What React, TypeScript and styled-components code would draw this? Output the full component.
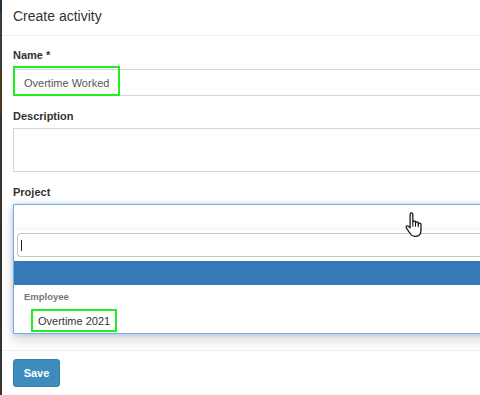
import React from "react";
import styled, { createGlobalStyle } from "styled-components";

const GlobalStyle = createGlobalStyle`
  html, body {
    margin: 0;
    height: 100%;
    overflow: hidden;
    background: #353535;
    font-family: "Liberation Sans", Arial, sans-serif;
  }
`;

const Page = styled.div`
  position: relative;
  display: flex;
  height: 395px;
  width: 480px;
  overflow: hidden;
`;

// sliver of the page behind the modal
const Backdrop = styled.div`
  width: 2px;
  flex-shrink: 0;
  background: linear-gradient(
    to bottom,
    #1d3346 0px, #1d3346 12px,
    #3b3b3b 12px, #3b3b3b 70px,
    #4b3a18 70px, #4b3a18 115px,
    #343434 115px
  );
`;

const Modal = styled.div`
  width: 640px;
  flex-shrink: 0;
  background: #fff;
  display: flex;
  flex-direction: column;
`;

const Header = styled.div`
  height: 36px;
  box-sizing: border-box;
  display: flex;
  align-items: center;
  padding: 0 11px 3px;
  border-bottom: 1px solid #f0f0f0;
`;

const Title = styled.h4`
  margin: 0;
  font-size: 14px;
  font-weight: 400;
  color: #333;
`;

const Body = styled.div`
  padding: 12px 0 16px 11px;
`;

const FormGroup = styled.div`
  margin-bottom: 13px;
  &:last-child {
    margin-bottom: 0;
  }
`;

const Label = styled.label<{ $gap: number }>`
  display: block;
  font-size: 11px;
  font-weight: 700;
  line-height: 15px;
  color: #333;
  margin-bottom: ${(p) => p.$gap}px;
`;

const TextInput = styled.div`
  position: relative;
  height: 27px;
  box-sizing: border-box;
  border: 1px solid #d2d6de;
  display: flex;
  align-items: center;
  padding-left: 10px;
  font-size: 11px;
  color: #555;
`;

const TextArea = styled.div`
  height: 44px;
  box-sizing: border-box;
  border: 1px solid #d2d6de;
`;

const Marker = styled.span`
  position: absolute;
  left: -1px;
  top: -4px;
  width: 107px;
  height: 30px;
  box-sizing: border-box;
  border: 2px solid #1fee1f;
`;

const SelectBox = styled.div`
  border: 1px solid #74abe0;
  box-shadow: 0 0 5px rgba(102, 175, 233, 0.45), 0 6px 12px rgba(0, 0, 0, 0.16);
`;

const Selection = styled.div`
  height: 25px;
  background: linear-gradient(to bottom, #fff 0, #fff 20px, #f6f6f6 25px);
`;

const Dropdown = styled.div`
  background: #fff;
  padding-top: 3px;
`;

const SearchBox = styled.div`
  height: 24px;
  box-sizing: border-box;
  margin: 0 0 4px 3px;
  border: 1px solid #c6c6c6;
  border-right: none;
  border-radius: 4px 0 0 4px;
  display: flex;
  align-items: center;
  padding-left: 3px;
`;

const Caret = styled.span`
  width: 1px;
  height: 11px;
  background: #222;
`;

const ActiveRow = styled.div`
  height: 24px;
  background: #337ab7;
`;

const GroupLabel = styled.div`
  height: 24px;
  line-height: 24px;
  padding-left: 10px;
  font-size: 9.5px;
  font-weight: 700;
  color: #777;
`;

const OptionRow = styled.div`
  height: 24px;
  padding-left: 17px;
  display: flex;
  align-items: flex-start;
`;

const OptionText = styled.span`
  height: 23px;
  box-sizing: border-box;
  border: 2px solid #1fee1f;
  padding: 0 5px;
  display: flex;
  align-items: center;
  font-size: 11px;
  color: #333;
`;

const Footer = styled.div`
  border-top: 1px solid #f0f0f0;
  padding: 8px 11px;
`;

const Button = styled.button`
  width: 47px;
  height: 28px;
  box-sizing: border-box;
  border: 1px solid #367fa9;
  border-radius: 3px;
  background: #3c8dbc;
  color: #fff;
  font-family: inherit;
  font-size: 11px;
  font-weight: 700;
  padding: 0;
`;

const Pointer = styled.svg`
  position: absolute;
  left: 404px;
  top: 212px;
`;

function HandCursor() {
  return (
    <Pointer width="19" height="26" viewBox="0 0 16 23">
      <path
        d="M5 2 a1.2 1.2 0 0 1 2.4 0 V9 a1.2 1.2 0 0 1 2.4 0 V10 a1.2 1.2 0 0 1 2.4 0 V11 a1.2 1.2 0 0 1 2.4 0 V16 c0 3 -1.5 5.5 -4.5 5.5 H9 c-2 0 -3 -1 -4 -2.5 L1.6 14 a1.2 1.2 0 0 1 1.8 -1.5 L5 14 Z"
        fill="#fff"
        stroke="#111"
        strokeWidth="1.1"
        strokeLinejoin="round"
      />
      <path d="M7.4 9 V13 M9.8 10 V13 M12.2 11 V13.5" stroke="#111" strokeWidth="0.9" />
    </Pointer>
  );
}

export default function App() {
  return (
    <Page>
      <GlobalStyle />
      <Backdrop />
      <Modal>
        <Header>
          <Title>Create activity</Title>
        </Header>
        <Body>
          <FormGroup>
            <Label $gap={6}>Name *</Label>
            <TextInput>
              <Marker />
              Overtime Worked
            </TextInput>
          </FormGroup>
          <FormGroup>
            <Label $gap={4}>Description</Label>
            <TextArea />
          </FormGroup>
          <FormGroup>
            <Label $gap={4}>Project</Label>
            <SelectBox>
              <Selection />
              <Dropdown>
                <SearchBox>
                  <Caret />
                </SearchBox>
                <ActiveRow />
                <GroupLabel>Employee</GroupLabel>
                <OptionRow>
                  <OptionText>Overtime 2021</OptionText>
                </OptionRow>
              </Dropdown>
            </SelectBox>
          </FormGroup>
        </Body>
        <Footer>
          <Button>Save</Button>
        </Footer>
      </Modal>
      <HandCursor />
    </Page>
  );
}
